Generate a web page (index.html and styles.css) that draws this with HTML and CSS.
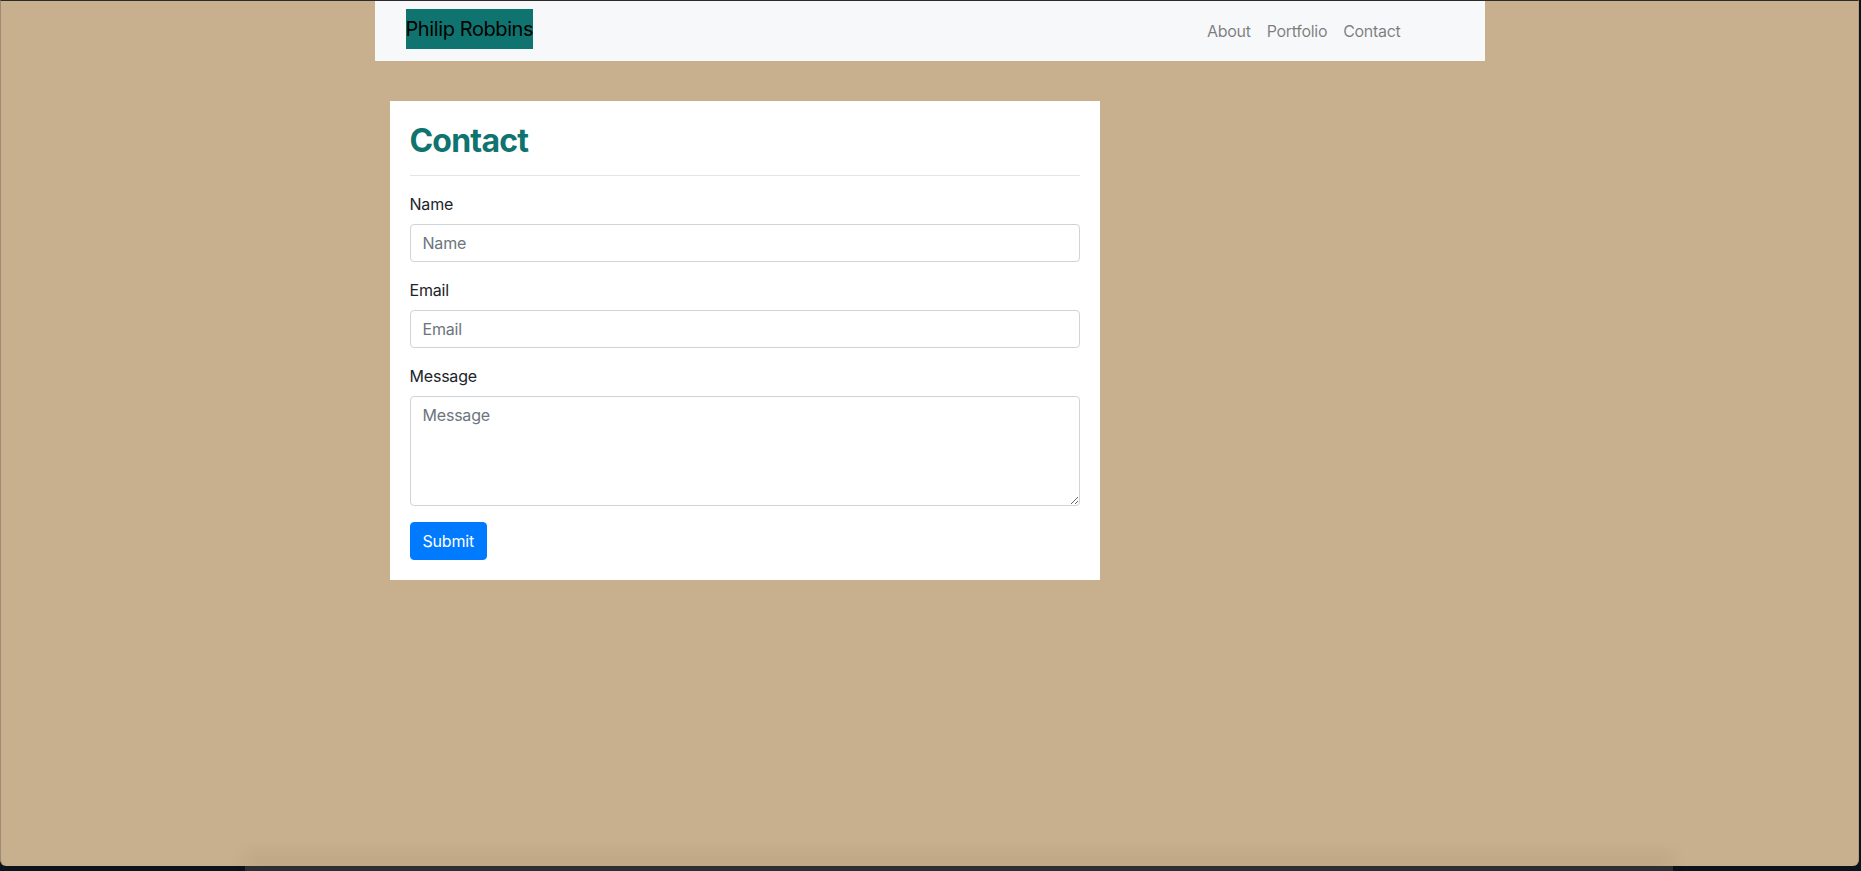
FILE: index.html
```html
<!DOCTYPE html>
<html lang="en">
<head>
<meta charset="utf-8">
<title>Contact - Philip Robbins</title>
<link rel="stylesheet" href="styles.css">
</head>
<body>
<div class="screen">
  <div class="window">
    <div class="container">
      <nav class="navbar">
        <a class="brand" href="#">Philip Robbins</a>
        <ul class="nav">
          <li><a class="nav-link" href="#">About</a></li>
          <li><a class="nav-link" href="#">Portfolio</a></li>
          <li><a class="nav-link" href="#">Contact</a></li>
        </ul>
      </nav>
      <main class="card">
        <h2 class="title">Contact</h2>
        <hr class="rule">
        <form class="form">
          <div class="form-group">
            <label class="label" for="name">Name</label>
            <input class="control" id="name" type="text" placeholder="Name">
          </div>
          <div class="form-group">
            <label class="label" for="email">Email</label>
            <input class="control" id="email" type="email" placeholder="Email">
          </div>
          <div class="form-group">
            <label class="label" for="message">Message</label>
            <textarea class="control textarea" id="message" rows="4" placeholder="Message"></textarea>
          </div>
          <button class="btn" type="button">Submit</button>
        </form>
      </main>
    </div>
  </div>
  <div class="dock"></div>
</div>
</body>
</html>
```
FILE: styles.css
```css
* { box-sizing: border-box; }

html, body {
  margin: 0;
  padding: 0;
}

body {
  font-family: Inter, "Noto Sans", "Liberation Sans", sans-serif;
  font-size: 16px;
  line-height: 1.5;
  color: #212529;
  background: #0b141d;
  overflow: hidden;
}

.screen {
  position: relative;
  width: 1861px;
  height: 871px;
  background: #0b141d;
}

.window {
  width: 1859px;
  height: 866px;
  background: #c8af8d;
  border-top: 1px solid #2b2b2b;
  border-left: 1px solid #9c8a72;
  border-right: 1px solid #b49c7c;
  border-radius: 0 0 6px 6px;
}

.container {
  width: 1110px;
  margin: 0 auto;
}

.navbar {
  height: 60px;
  background: #f7f8fa;
  display: flex;
  align-items: flex-start;
  justify-content: space-between;
  padding: 8px 76px 0 31px;
}

.brand {
  display: block;
  height: 40px;
  line-height: 40px;
  padding: 0;
  background: #0f7470;
  color: #000;
  font-size: 20px;
  text-decoration: none;
  letter-spacing: -0.4px;
  white-space: nowrap;
}

.nav {
  list-style: none;
  margin: 2px 0 0;
  padding: 0;
  display: flex;
}

.nav-link {
  display: block;
  padding: 8px;
  color: rgba(0, 0, 0, 0.5);
  text-decoration: none;
  font-size: 16px;
  line-height: 24px;
  letter-spacing: -0.3px;
}

.card {
  width: 710px;
  margin: 40px 0 0 15px;
  background: #fff;
  padding: 20px;
}

.title {
  margin: 0;
  padding-top: 1px;
  height: 38px;
  font-size: 32px;
  line-height: 38px;
  font-weight: 700;
  color: #0f7470;
  letter-spacing: -0.8px;
}

.rule {
  margin: 16px 0;
  border: 0;
  border-top: 1px solid rgba(0, 0, 0, 0.1);
}

.form {
  margin: 0;
}

.form-group {
  margin-bottom: 16px;
}

.label {
  display: block;
  margin-bottom: 8px;
  font-size: 16px;
  line-height: 24px;
  letter-spacing: -0.2px;
}

.control {
  display: block;
  width: 100%;
  height: 38px;
  padding: 6px 12px;
  font-family: inherit;
  font-size: 16px;
  line-height: 24px;
  color: #495057;
  background: #fff;
  border: 1px solid #ced4da;
  border-radius: 4px;
  letter-spacing: -0.2px;
}

.control::placeholder {
  color: #6c757d;
  opacity: 1;
}

.textarea {
  height: 110px;
  resize: vertical;
}

.btn {
  display: inline-block;
  height: 38px;
  padding: 6px 12px;
  font-family: inherit;
  font-size: 16px;
  line-height: 24px;
  color: #fff;
  background: #007bff;
  border: 1px solid #007bff;
  border-radius: 4px;
  letter-spacing: -0.2px;
}

.dock {
  position: absolute;
  left: 245px;
  bottom: 0;
  width: 1428px;
  height: 5px;
  background: #2c2e31;
  box-shadow: 0 -8px 18px rgba(40, 25, 10, 0.18);
}
```
